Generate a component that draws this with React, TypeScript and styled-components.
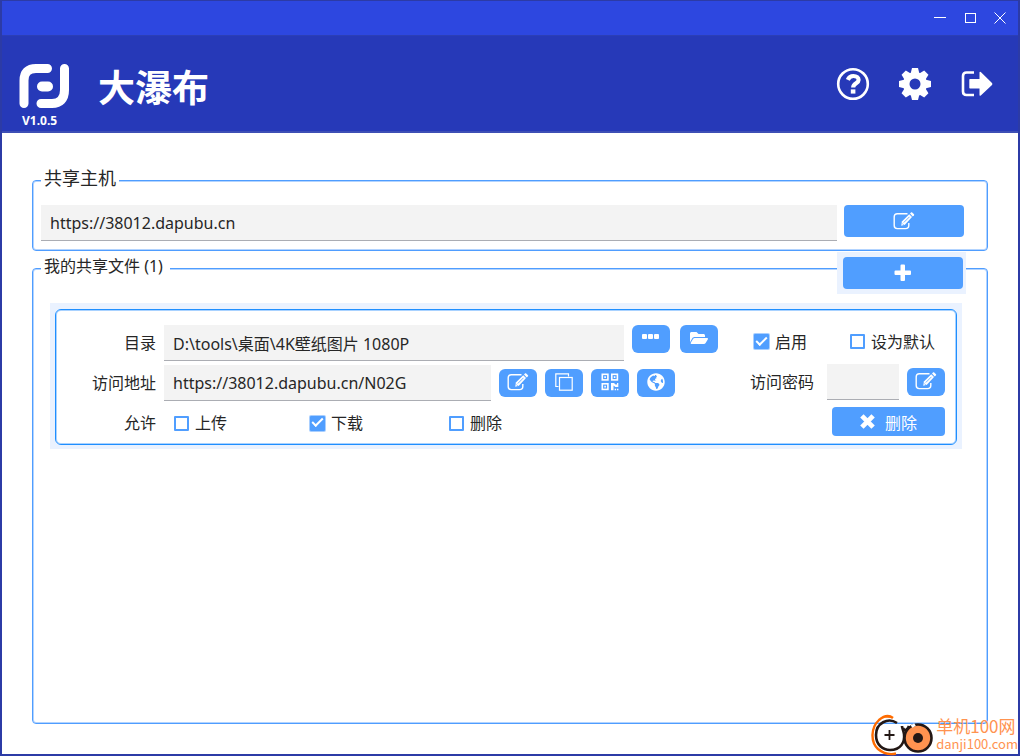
import React from "react";
import styled, { createGlobalStyle, css } from "styled-components";
import { FaGlobeAmericas, FaFolderOpen } from "react-icons/fa";

const GlobalStyle = createGlobalStyle`
  *, *::before, *::after { box-sizing: border-box; }
  body { margin: 0; background: #fff; }
  body, button, input {
    font-family: "Noto Sans", "Noto Sans CJK SC", sans-serif;
    font-size: 16px;
    color: #262626;
  }
  svg { display: block; flex: none; }
`;

const AppWindow = styled.div`
  position: relative;
  display: flex;
  flex-direction: column;
  min-height: 100vh;
  background: #fff;
  border: 2px solid #2c3ba6;
  border-top-width: 1px;
`;

const TitleBar = styled.div`
  display: flex;
  justify-content: flex-end;
  align-items: center;
  height: 35px;
  padding-right: 3px;
  background: #2d47e0;
  border-bottom: 1px solid #2c3fb6;
`;

const WindowButton = styled.button`
  display: grid;
  place-items: center;
  width: 30px;
  height: 30px;
  padding: 0;
  border: 0;
  background: none;
  color: #fff;
`;

const Header = styled.header`
  display: flex;
  align-items: center;
  height: 97px;
  padding: 0 23px 0 16px;
  background: #2639b8;
  border-bottom: 2px solid #3d4fb5;
  color: #fff;
`;

const Brand = styled.div`
  display: flex;
  flex-direction: column;
  align-items: flex-start;
  width: 80px;
  padding-top: 26px;
`;

const Version = styled.span`
  padding-left: 4px;
  font-size: 12px;
  line-height: 20px;
  font-weight: 700;
`;

const Title = styled.h1`
  flex: 1;
  margin: 0;
  padding-top: 8px;
  font-size: 37px;
  line-height: 48px;
  font-weight: 700;
`;

const HeaderActions = styled.nav`
  display: flex;
  gap: 26px;
`;

const HeaderButton = styled.button`
  display: grid;
  place-items: center;
  width: 36px;
  height: 36px;
  padding: 0;
  border: 0;
  background: none;
  color: #fff;
`;

const Content = styled.main`
  flex: 1;
  display: flex;
  flex-direction: column;
  gap: 3px;
  padding: 33px 30px 30px;
`;

const Group = styled.fieldset`
  flex: 1;
  min-width: 0;
  margin: 0;
  padding: 0 23px 9px 8px;
  border: 1px solid #4f9dff;
  border-radius: 4px;
  box-shadow: inset 0 0 0 1px #b3d4ff;
`;

const Legend = styled.legend<{ $large?: boolean }>`
  padding: ${(p) => (p.$large ? "0 3px 4px" : "0 7px 4px 3px")};
  background: #fff;
  font-size: ${(p) => (p.$large ? 18 : 16)}px;
  line-height: 24px;
`;

const HostRow = styled.div`
  display: flex;
  gap: 7px;
  padding-top: 11px;
`;

const HostSection = styled.section`
  display: flex;
`;

const FilesSection = styled.section`
  position: relative;
  flex: 1;
  display: flex;
`;

const AddSlot = styled.div`
  position: absolute;
  top: -2px;
  right: 22px;
  padding: 5px 3px 5px 6px;
  background: #eaf2ff;
`;

const TextField = styled.input<{ $width?: number }>`
  ${(p) => (p.$width ? css`flex: none; width: ${p.$width}px;` : css`flex: 1; min-width: 0;`)}
  height: 36px;
  padding: 0 9px;
  border: 0;
  border-bottom: 1px solid #abadb3;
  border-radius: 0;
  background: #f3f3f3;
  outline: none;
`;

const WideButton = styled.button`
  display: flex;
  justify-content: center;
  align-items: center;
  width: 120px;
  height: 32px;
  padding: 0;
  border: 0;
  border-radius: 4px;
  background: #509eff;
  color: #fff;
`;

const DeleteButton = styled(WideButton)`
  gap: 10px;
  width: 113px;
  height: 29px;
`;

const IconButton = styled.button`
  display: grid;
  place-items: center;
  width: 38px;
  height: 28px;
  padding: 0 0 2px;
  border: 0;
  border-radius: 6px;
  background: #509eff;
  color: #fff;
`;

const CardFrame = styled.div`
  margin: 21px 2px 0 9px;
  padding: 6px 5px 4px;
  background: #eaf2ff;
`;

const Card = styled.article`
  padding: 13px 11px 1px 0;
  background: #fff;
  border: 1px solid #1f8fff;
  border-radius: 6px;
  box-shadow: inset 0 0 0 1px #a9d2ff;
`;

const Row = styled.div`
  display: flex;
  align-items: center;
  height: 40px;
`;

const RowLabel = styled.label`
  flex: none;
  width: 108px;
  padding-right: 8px;
  text-align: right;
  line-height: 24px;
`;

const ButtonGroup = styled.div<{ $gap: number; $top?: boolean }>`
  display: flex;
  align-self: ${(p) => (p.$top ? "flex-start" : "center")};
  gap: ${(p) => p.$gap}px;
  margin-left: 8px;
`;

const RowEnd = styled.div<{ $inset?: number; $gap?: number }>`
  display: flex;
  align-items: center;
  gap: ${(p) => p.$gap ?? 0}px;
  margin-left: auto;
  padding: 0 ${(p) => p.$inset ?? 0}px 3px 0;
`;

const DirectoryBox = styled.div`
  flex: 1;
  display: flex;
  align-items: center;
  padding-right: 35px;
`;

const AddressBox = styled(DirectoryBox)`
  padding-right: 75px;
`;

const PasswordLabel = styled.label`
  padding-right: 13px;
  line-height: 24px;
`;

const Permissions = styled.div`
  display: grid;
  grid-template-columns: 136px 139px auto;
  padding-left: 9px;
`;

const CheckLabel = styled.label`
  display: flex;
  align-items: center;
  gap: 5px;
  line-height: 24px;
`;

const CheckInput = styled.input`
  appearance: none;
  display: grid;
  place-items: center;
  width: 15px;
  height: 15px;
  margin: 1px;
  border: 2px solid #509eff;
  border-radius: 1px;
  background: #fff;

  &:checked {
    background: #509eff;
    box-shadow: 0 0 0 1px #a9cfff;
  }

  &:checked::after {
    content: "";
    width: 11px;
    height: 6px;
    border: solid #fff;
    border-width: 0 0 2px 2px;
    transform: translateY(-2px) rotate(-45deg);
  }
`;

const Watermark = styled.a`
  position: absolute;
  right: 0;
  bottom: -2px;
  display: flex;
  align-items: center;
  gap: 1px;
  color: #ff9350;
  text-decoration: none;
`;

const WatermarkText = styled.span`
  display: flex;
  flex-direction: column;
  padding-bottom: 2px;
  font-family: "Noto Sans CJK SC", sans-serif;
`;

const WatermarkName = styled.span`
  font-size: 17px;
  line-height: 19px;
`;

const WatermarkDomain = styled.span`
  font-size: 13px;
  line-height: 17px;
`;

function LogoIcon() {
  return (
    <svg width="56" height="48" viewBox="0 0 56 48" fill="none" stroke="#fff" strokeWidth="9" strokeLinecap="round" aria-hidden="true">
      <path d="M6 40.500V17.500C6 9.500 10 5.500 18 5.500H29.500" />
      <path d="M46.500 5.500V27C46.500 36 42 40.500 34 40.500H23" />
      <path d="M24 23.500H30" strokeWidth="10" />
    </svg>
  );
}

function HelpIcon() {
  return (
    <svg width="34" height="34" viewBox="0 0 34 34" fill="none" stroke="#fff" aria-hidden="true">
      <circle cx="17" cy="17" r="14.800" strokeWidth="2.600" />
      <path d="M11.800 12.800C13 10 14.800 9 17.400 9C20.600 9 22.600 10.800 22.600 13C22.600 16.400 17.200 16.200 17.200 20.500" strokeWidth="4.200" />
      <path d="M14.800 24.500H19.400" strokeWidth="4.200" />
    </svg>
  );
}

function EditIcon() {
  return (
    <svg width="22" height="20" viewBox="0 0 22 20" fill="none" aria-hidden="true">
      <path d="M14.500 2.700H4.300Q1.200 2.700 1.200 5.800V14.500Q1.200 17.600 4.300 17.600H12.500Q15.800 17.600 15.800 14.500V12" stroke="#fff" strokeWidth="1.400" />
      <path d="M8.200 14.800 8.900 10.600 16.200 3.300 19 6.100 11.900 13.700Z" fill="#fff" />
      <path d="M17 2.500 18.200 1.300Q18.700 1 19.200 1.500L21 3.300Q21.400 3.800 21 4.200L19.800 5.400Z" fill="#fff" />
      <path d="M10.800 11.500 16.500 5.800M9.300 12.500l1.300 1.300" stroke="#509eff" strokeWidth=".8" />
    </svg>
  );
}

function GearIcon() {
  return (
    <svg width="34" height="34" viewBox="-17 -17 34 34" fill="#fff" aria-hidden="true">
      {[0, 45, 90, 135].map((a) => (
        <path key={a} transform={`rotate(${a})`} d="M-3-16H3L4.500-10V10L3 16H-3L-4.500 10V-10Z" />
      ))}
      <circle r="12" />
      <circle r="5.500" fill="#2639b8" />
    </svg>
  );
}

function ExitIcon() {
  return (
    <svg width="32" height="28" viewBox="0 0 32 28" aria-hidden="true">
      <path d="M13 2.500H5.500Q2 2.500 2 6V21.500Q2 25 5.500 25H13" fill="none" stroke="#fff" strokeWidth="2.600" />
      <path d="M9 9H18.500V2.500Q18.600 1.200 19.800 2L31 13Q31.800 14 31 15L19.800 25.500Q18.500 26.300 18.500 25V18.500H9Q8.300 18.500 8.300 17.800V9.700Q8.300 9 9 9Z" fill="#fff" />
    </svg>
  );
}

function PlusIcon() {
  return (
    <svg width="18" height="18" viewBox="0 0 18 18" aria-hidden="true">
      <path d="M6.500 1.500Q6.500.5 7.500.5H10Q11 .5 11 1.500V6.500H16Q17 6.500 17 7.500V10Q17 11 16 11H11V16Q11 17 10 17H7.500Q6.500 17 6.500 16V11H1.500Q.5 11 .5 10V7.500Q.5 6.500 1.500 6.500H6.500Z" fill="#fff" />
    </svg>
  );
}

function CrossIcon() {
  return (
    <svg width="15" height="15" viewBox="0 0 15 15" aria-hidden="true">
      <path d="M1.900 1.900 13.100 13.100M13.100 1.900 1.900 13.100" stroke="#fff" strokeWidth="4.800" />
    </svg>
  );
}

function DotsIcon() {
  return (
    <svg width="18" height="12" viewBox="0 0 18 12" fill="#fff" aria-hidden="true">
      <rect x="0" y="2" width="5" height="5" rx="1" />
      <rect x="6" y="2" width="5" height="5" rx="1" />
      <rect x="12" y="2" width="5" height="5" rx="1" />
    </svg>
  );
}

function CopyIcon() {
  return (
    <svg width="18" height="18" viewBox="0 0 18 18" fill="none" stroke="#fff" strokeWidth="1.200" aria-hidden="true">
      <path d="M3.500 13.500H.8V.8H13.500V3.500" />
      <rect x="4.500" y="4.500" width="12.700" height="12.700" />
    </svg>
  );
}

function QrIcon() {
  return (
    <svg width="18" height="18" viewBox="0 0 18 18" aria-hidden="true">
      <g fill="none" stroke="#fff" strokeWidth="1.600">
        <rect x="1.300" y="1.300" width="5.600" height="5.600" />
        <rect x="10.800" y="1.300" width="5.600" height="5.600" />
        <rect x="1.300" y="10.800" width="5.600" height="5.600" />
      </g>
      <path d="M3.300 3.300h1.600v1.600H3.300zM12.800 3.300h1.600v1.600h-1.600zM3.300 12.800h1.600v1.600H3.300zM10 10h3l1.500 1.500H16V10h1.300v4h-3L12.500 12.500v4.800H10zM13.700 15.700h1.400v1.500h-1.400zM16 15.700h1.400v1.500H16z" fill="#fff" />
    </svg>
  );
}

function MascotIcon() {
  return (
    <svg width="64" height="42" viewBox="0 0 64 42" fill="none" aria-hidden="true">
      <path d="M22 4C17 0 12 2.500 8 6C-.5 14-.5 28 7 35C13 40 19 41 25 39.500" stroke="#ff6c00" strokeWidth="2.400" />
      <path d="M13 3.500Q17-1 22 4Z" fill="#ff6c00" />
      <path d="M26 9C17 3 5 9 5 21C5 31 12 36 19 36C30 36 34 28 33 20C32 15 31 14 31 12M32 14C34 18 37 15 38 12" stroke="#231815" strokeWidth="2.600" />
      <circle cx="47" cy="24" r="13.500" fill="#ff9350" stroke="#231815" strokeWidth="2.600" />
      <circle cx="47" cy="24" r="5" fill="#231815" />
      <path d="M18.500 16v10M13.500 21h10" stroke="#231815" strokeWidth="1.800" />
      <path d="M40.500 12.500 44 10.500" stroke="#fff" strokeWidth="3" />
    </svg>
  );
}

function Check({ label, checked }: { label: string; checked?: boolean }) {
  return (
    <CheckLabel>
      <CheckInput type="checkbox" defaultChecked={checked} />
      {label}
    </CheckLabel>
  );
}

export default function App() {
  return (
    <>
      <GlobalStyle />
      <AppWindow>
        <TitleBar>
          <WindowButton aria-label="最小化">
            <svg width="12" height="12" viewBox="0 0 12 12"><path d="M0 5.500H12" stroke="#fff" /></svg>
          </WindowButton>
          <WindowButton aria-label="最大化">
            <svg width="12" height="12" viewBox="0 0 12 12"><rect x="1.500" y="1.500" width="10" height="9" fill="none" stroke="#fff" /></svg>
          </WindowButton>
          <WindowButton aria-label="关闭">
            <svg width="12" height="12" viewBox="0 0 12 12"><path d="M.5.5 11.500 11.500M11.500.5.5 11.500" stroke="#fff" /></svg>
          </WindowButton>
        </TitleBar>

        <Header>
          <Brand>
            <LogoIcon />
            <Version>V1.0.5</Version>
          </Brand>
          <Title>大瀑布</Title>
          <HeaderActions>
            <HeaderButton aria-label="帮助"><HelpIcon /></HeaderButton>
            <HeaderButton aria-label="设置"><GearIcon /></HeaderButton>
            <HeaderButton aria-label="退出"><ExitIcon /></HeaderButton>
          </HeaderActions>
        </Header>

        <Content>
          <HostSection>
            <Group>
              <Legend $large>共享主机</Legend>
              <HostRow>
                <TextField aria-label="共享主机" defaultValue="https://38012.dapubu.cn" />
                <WideButton aria-label="编辑主机"><EditIcon /></WideButton>
              </HostRow>
            </Group>
          </HostSection>

          <FilesSection>
            <Group>
              <Legend>我的共享文件 (1)</Legend>
              <CardFrame>
                <Card>
                  <Row>
                    <RowLabel htmlFor="directory">目录</RowLabel>
                    <DirectoryBox>
                      <TextField id="directory" defaultValue="D:\tools\桌面\4K壁纸图片 1080P" />
                      <ButtonGroup $gap={10} $top>
                        <IconButton aria-label="浏览"><DotsIcon /></IconButton>
                        <IconButton aria-label="打开文件夹"><FaFolderOpen size={18} /></IconButton>
                      </ButtonGroup>
                    </DirectoryBox>
                    <RowEnd $inset={10} $gap={42}>
                      <Check label="启用" checked />
                      <Check label="设为默认" />
                    </RowEnd>
                  </Row>
                  <Row>
                    <RowLabel htmlFor="address">访问地址</RowLabel>
                    <AddressBox>
                      <TextField id="address" defaultValue="https://38012.dapubu.cn/N02G" />
                      <ButtonGroup $gap={8}>
                        <IconButton aria-label="编辑地址"><EditIcon /></IconButton>
                        <IconButton aria-label="复制"><CopyIcon /></IconButton>
                        <IconButton aria-label="二维码"><QrIcon /></IconButton>
                        <IconButton aria-label="在浏览器中打开"><FaGlobeAmericas size={18} /></IconButton>
                      </ButtonGroup>
                    </AddressBox>
                    <RowEnd>
                      <PasswordLabel htmlFor="password">访问密码</PasswordLabel>
                      <TextField id="password" $width={72} />
                      <ButtonGroup $gap={8}>
                        <IconButton aria-label="编辑密码"><EditIcon /></IconButton>
                      </ButtonGroup>
                    </RowEnd>
                  </Row>
                  <Row>
                    <RowLabel as="span">允许</RowLabel>
                    <Permissions>
                      <Check label="上传" />
                      <Check label="下载" checked />
                      <Check label="删除" />
                    </Permissions>
                    <RowEnd>
                      <DeleteButton><CrossIcon />删除</DeleteButton>
                    </RowEnd>
                  </Row>
                </Card>
              </CardFrame>
            </Group>
            <AddSlot>
              <WideButton aria-label="添加共享"><PlusIcon /></WideButton>
            </AddSlot>
          </FilesSection>
        </Content>

        <Watermark href="#">
          <MascotIcon />
          <WatermarkText>
            <WatermarkName>单机100网</WatermarkName>
            <WatermarkDomain>danji100.com</WatermarkDomain>
          </WatermarkText>
        </Watermark>
      </AppWindow>
    </>
  );
}
